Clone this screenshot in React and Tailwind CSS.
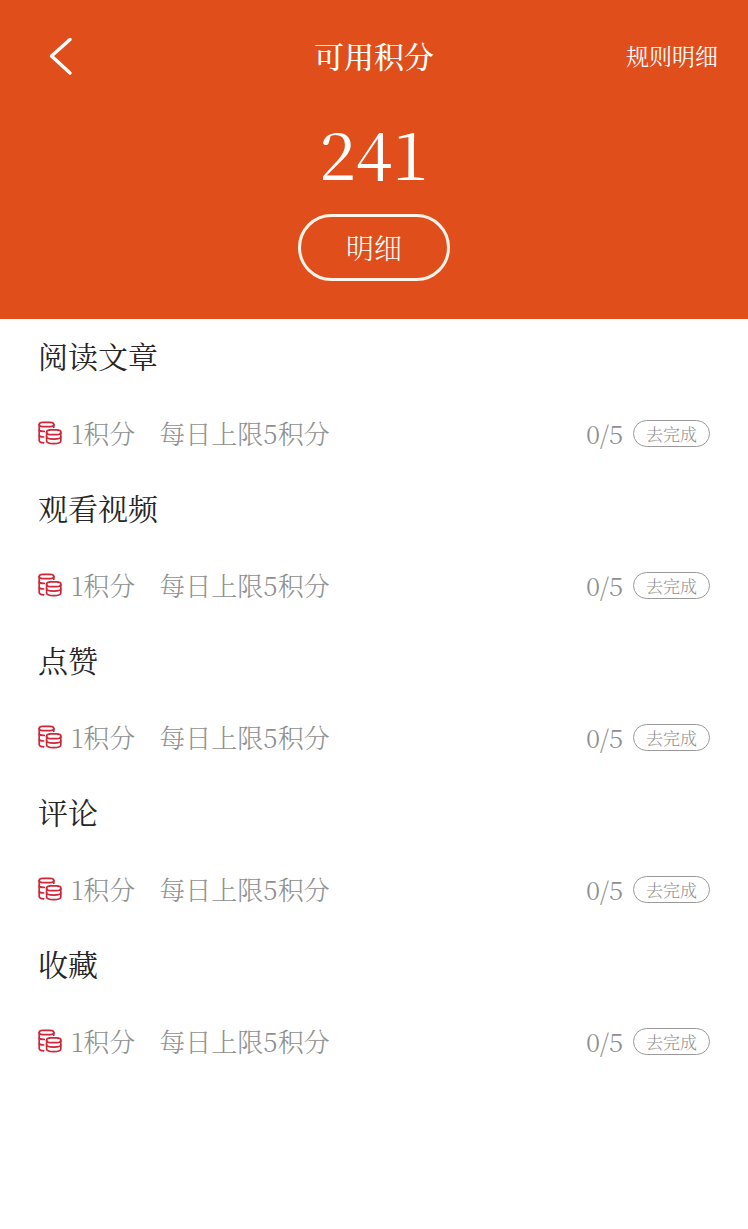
import React from 'react';

const tasks = [
  { id: 'read', title: '阅读文章', points: 1, limit: 5, done: 0 },
  { id: 'watch', title: '观看视频', points: 1, limit: 5, done: 0 },
  { id: 'like', title: '点赞', points: 1, limit: 5, done: 0 },
  { id: 'comment', title: '评论', points: 1, limit: 5, done: 0 },
  { id: 'collect', title: '收藏', points: 1, limit: 5, done: 0 },
];

function CoinsIcon() {
  return (
    <svg
      viewBox="0 0 24 24"
      className="h-6 w-6 shrink-0"
      fill="none"
      stroke="#cf2638"
      strokeWidth="1.7"
      strokeLinecap="round"
      strokeLinejoin="round"
      aria-hidden="true"
    >
      <rect x="1.2" y="1.4" width="14.6" height="4.2" rx="3.6" ry="2.1" />
      <path d="M1.2 3.5v16c0 1.400 1.400 2.200 4.600 2.300" />
      <path d="M15.800 3.500v2.700" />
      <path d="M1.200 9.200c.6.9 2 1.200 5 1.200" />
      <path d="M1.200 14.800c.6.9 2 1.200 4.400 1.200" />
      <rect x="8.600" y="8.800" width="14.200" height="4.800" rx="4.400" ry="2.400" />
      <path d="M8.600 11.200v8.800c0 1.500 2.800 2.600 7.100 2.600s7.100-1.100 7.100-2.600v-8.800" />
      <path d="M8.600 15.800c0 1.500 2.800 2.300 7.100 2.300s7.100-.8 7.100-2.300" />
    </svg>
  );
}

function Header({ total }) {
  return (
    <header className="bg-[#e04e1c] text-white pt-7 pb-[38px]">
      <div className="grid grid-cols-[1fr_auto_1fr] items-center h-14 pl-[46px] pr-[30px]">
        <button type="button" aria-label="返回" className="justify-self-start">
          <svg viewBox="0 0 28 40" className="h-10 w-7" fill="none" stroke="currentColor" strokeWidth="3.4" strokeLinecap="round" strokeLinejoin="round">
            <path d="M24 3.500L5.500 20l18.500 17" />
          </svg>
        </button>
        <h1 className="pb-0.5 -ml-4 text-[30px] leading-10 font-medium text-center whitespace-nowrap">可用积分</h1>
        <a href="#rules" className="justify-self-end text-[23px] leading-8 font-normal whitespace-nowrap">
          规则明细
        </a>
      </div>
      <div className="flex flex-col items-center">
        <p className="text-[66px] leading-[80px] mt-7 mb-[22px]">{total}</p>
        <button type="button" className="rounded-full border-3 border-[#fff3ea] px-[45px] pt-3 pb-[13px] text-[28px] leading-9 font-light">
          明细
        </button>
      </div>
    </header>
  );
}

function TaskItem({ task }) {
  return (
    <li className="h-38 pt-4">
      <h2 className="text-[30px] leading-10 font-normal text-[#262626]">{task.title}</h2>
      <div className="mt-[38px] flex items-center h-10 text-[26px] leading-10 font-light text-[#8f8f8f] whitespace-nowrap">
        <CoinsIcon />
        <span className="ml-[9px]">{task.points}积分</span>
        <span className="ml-6">每日上限{task.limit}积分</span>
        <span className="ml-auto text-[26px]">
          {task.done}/{task.limit}
        </span>
        <button type="button" className="ml-2.5 rounded-full border border-[#999999] px-3 text-[17px] leading-[25px]">
          去完成
        </button>
      </div>
    </li>
  );
}

export default function App() {
  return (
    <div className="min-h-screen bg-white font-['Noto_Serif_CJK_SC','Noto_Serif_SC','Liberation_Serif','Noto_Sans_CJK_SC',serif]">
      <Header total={241} />
      <main>
        <ul className="px-[38px]">
          {tasks.map((task) => (
            <TaskItem key={task.id} task={task} />
          ))}
        </ul>
      </main>
    </div>
  );
}
